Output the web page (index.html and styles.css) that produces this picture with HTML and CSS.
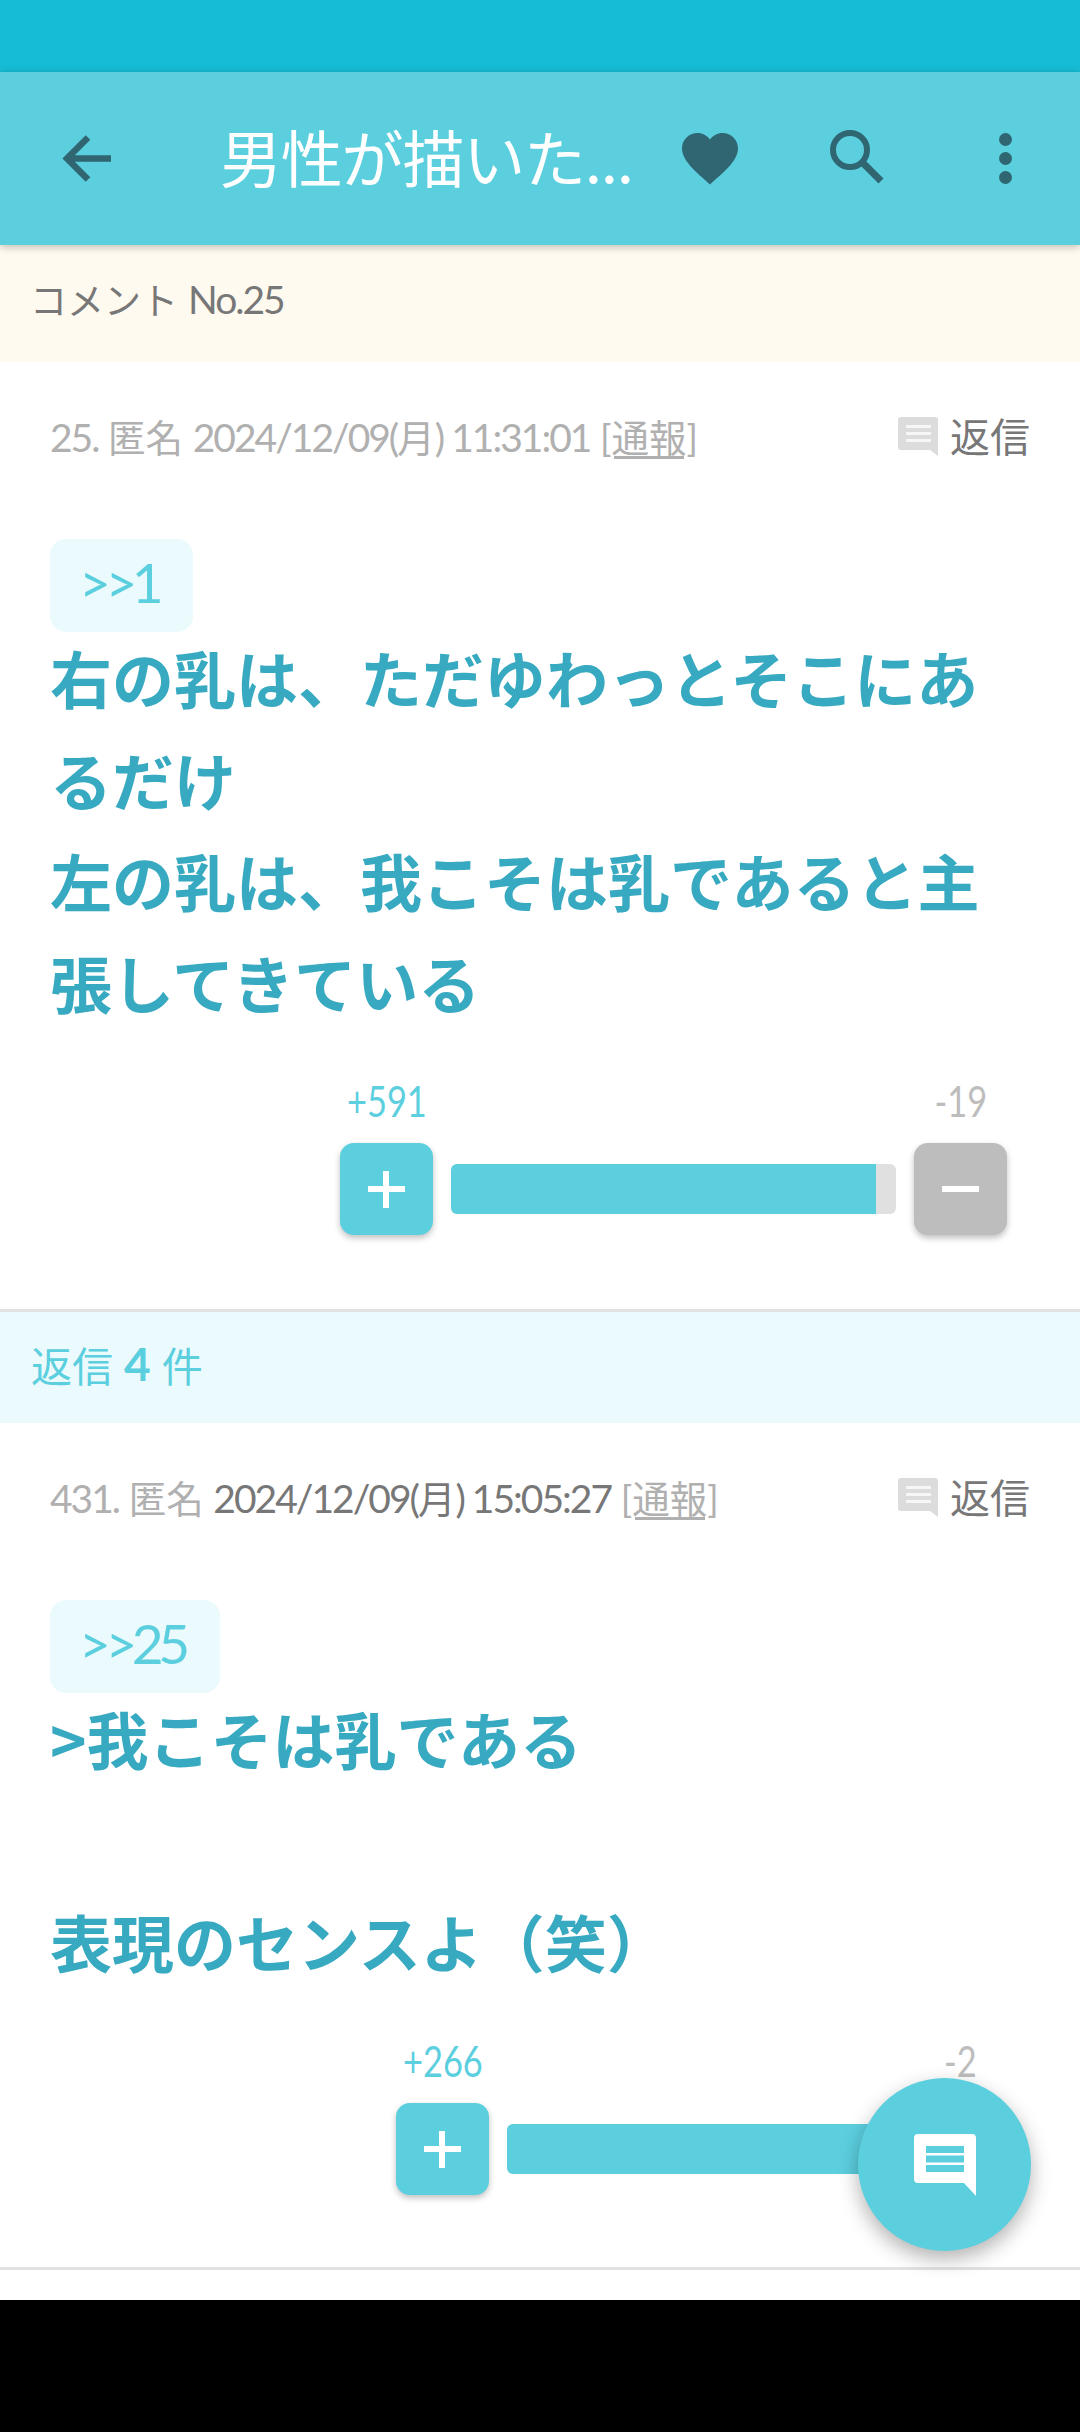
FILE: index.html
```html
<!DOCTYPE html>
<html lang="ja">
<head>
  <meta charset="UTF-8">
  <title>コメント No.25</title>
  <link rel="stylesheet" href="styles.css">
</head>
<body>
  <div class="status-bar"></div>
  <header class="app-bar">
    <svg class="icon-back" viewBox="0 0 49 49"><path d="M49 24.500H6M26 3.500L5 24.500l21 21" fill="none" stroke="#2f6672" stroke-width="6.500"/></svg>
    <h1 class="title">男性が描いた...</h1>
    <svg class="icon-heart" viewBox="0 0 56 52"><path d="M28 51.500C18 42 0 29 0 15.500 0 6.500 7 0 15.500 0 20.500 0 25 2.500 28 6.500 31 2.500 35.500 0 40.500 0 49 0 56 6.500 56 15.500 56 29 38 42 28 51.500z" fill="#2f6672"/></svg>
    <svg class="icon-search" viewBox="0 0 54 54"><circle cx="20" cy="20" r="17" fill="none" stroke="#2f6672" stroke-width="6"/><path d="M32 32l19 19" fill="none" stroke="#2f6672" stroke-width="7"/></svg>
    <div class="dots"><i></i><i></i><i></i></div>
  </header>

  <main class="content">
    <div class="notice">コメント <span class="num">No.25</span></div>

    <article class="comment first">
      <div class="meta">
        <span class="meta-text"><span class="num">25.</span> 匿名 <span class="num">2024/12/09(</span>月<span class="num">) 11:31:01</span> <u>[通報]</u></span>
        <span class="reply">
          <svg class="icon-reply" viewBox="0 0 40 40"><path d="M3 0h34a3 3 0 0 1 3 3v36l-8-6H3a3 3 0 0 1-3-3V3a3 3 0 0 1 3-3z" fill="#dcdcdc"/><path d="M8 8h25v3H8zM8 15h25v3H8zM8 22h25v3H8z" fill="#f6f6f6"/></svg>
          返信
        </span>
      </div>
      <div class="anchor">&gt;&gt;1</div>
      <p class="body">右の乳は、ただゆわっとそこにあるだけ<br>左の乳は、我こそは乳であると主張してきている</p>
      <div class="votes">
        <div class="vote-col">
          <span class="count plus">+591</span>
          <span class="btn btn-plus"><i></i><i></i></span>
        </div>
        <div class="bar bar-long"><div class="bar-fill" style="width:95.500%"></div></div>
        <div class="vote-col">
          <span class="count minus">-19</span>
          <span class="btn btn-minus"><i></i></span>
        </div>
      </div>
    </article>

    <div class="reply-band">返信 <b>4</b> 件</div>

    <article class="comment">
      <div class="meta">
        <span class="meta-text"><span class="num">431.</span> 匿名 <span class="date"><span class="num">2024/12/09(</span>月<span class="num">) 15:05:27</span></span> <u>[通報]</u></span>
        <span class="reply">
          <svg class="icon-reply" viewBox="0 0 40 40"><path d="M3 0h34a3 3 0 0 1 3 3v36l-8-6H3a3 3 0 0 1-3-3V3a3 3 0 0 1 3-3z" fill="#dcdcdc"/><path d="M8 8h25v3H8zM8 15h25v3H8zM8 22h25v3H8z" fill="#f6f6f6"/></svg>
          返信
        </span>
      </div>
      <div class="anchor">&gt;&gt;25</div>
      <p class="body">&gt;我こそは乳である<br><br>表現のセンスよ（笑）</p>
      <div class="votes">
        <div class="vote-col">
          <span class="count plus">+266</span>
          <span class="btn btn-plus"><i></i><i></i></span>
        </div>
        <div class="bar bar-short"><div class="bar-fill" style="width:99%"></div></div>
        <div class="vote-col">
          <span class="count minus">-2</span>
          <span class="btn btn-minus"><i></i></span>
        </div>
      </div>
    </article>
  </main>

  <div class="nav-bar"></div>

  <button class="fab">
    <svg viewBox="0 0 62 62"><path d="M4 0h54a4 4 0 0 1 4 4v58L50 49H4a4 4 0 0 1-4-4V4a4 4 0 0 1 4-4z" fill="#fff"/><path d="M12 12h38v7H12zM12 21.500h38v7H12zM12 31h38v7H12z" fill="#5ccfdf"/></svg>
  </button>
</body>
</html>
```

FILE: styles.css
```css
* { box-sizing: border-box; }
html, body { margin: 0; height: 2432px; overflow: hidden; }
body {
  position: relative;
  display: flex;
  flex-direction: column;
  background: #fff;
  font-family: 'Lato', 'Noto Sans CJK JP', sans-serif;
  color: #777;
}

.status-bar { height: 72px; background: #16bcd4; }

.app-bar {
  position: relative;
  z-index: 2;
  height: 173px;
  display: flex;
  align-items: center;
  background: #5ccfdf;
  box-shadow: 0 2px 8px rgba(0,0,0,0.25);
}
.icon-back { width: 49px; height: 49px; margin-left: 62px; flex: none; }
.title {
  margin: -6px 0 0 109px;
  width: 462px;
  flex: none;
  font-size: 62px;
  font-weight: 400;
  color: #fff;
  white-space: nowrap;
  letter-spacing: -1.200px;
  font-family: 'Noto Sans CJK JP', sans-serif;
}
.icon-heart { width: 56px; height: 52px; flex: none; }
.icon-search { width: 54px; height: 54px; margin-left: 92px; margin-top: -3px; flex: none; }
.dots { margin-left: 115px; display: flex; flex-direction: column; gap: 6px; }
.dots i { display: block; width: 13px; height: 13px; border-radius: 50%; background: #2f6672; }

.content { flex: 1; display: flex; flex-direction: column; }

.num { font-size: 39px; letter-spacing: -2px; }

.notice {
  height: 117px;
  padding: 0 0 10px 30px;
  display: flex;
  align-items: center;
  gap: 10px;
  background: #fffaf0;
  font-size: 37px;
  color: #777;
}

.comment {
  padding: 0 50px;
  border-bottom: 3px solid #e2e2e2;
  height: 950px;
}
.comment + .reply-band + .comment { height: 847px; }

.meta {
  height: 177px;
  padding-top: 50px;
  display: flex;
  justify-content: space-between;
  align-items: flex-start;
  font-size: 37.500px;
  line-height: 50px;
  color: #b0b0b0;
}
.date { color: #777; }
.meta-text u { text-underline-offset: 4px; }
.reply {
  display: flex;
  align-items: center;
  gap: 12px;
  color: #777;
  font-size: 40px;
}
.icon-reply { width: 40px; height: 40px; }

.anchor {
  width: fit-content;
  height: 93px;
  padding: 0 35px 0 29px;
  line-height: 86px;
  border-radius: 16px;
  background: #ebfafc;
  color: #5ccfdf;
  font-size: 55px;
  letter-spacing: -5.500px;
}

.body {
  margin: -5px 0 0;
  font-family: 'Noto Sans CJK JP', sans-serif;
  font-size: 62px;
  font-weight: 700;
  line-height: 101.500px;
  color: #37a9c0;
}

.votes {
  margin-top: 28px;
  margin-right: 23px;
  display: flex;
  justify-content: flex-end;
  align-items: flex-end;
  gap: 18px;
}
.vote-col { display: flex; flex-direction: column; align-items: center; width: 93px; }
.count {
  font-size: 43px;
  line-height: 80px;
  margin-bottom: 2px;
  white-space: nowrap;
  transform: scaleX(0.8);
}
.plus { color: #5ccfdf; }
.minus { color: #bdbdbd; }
.btn {
  position: relative;
  display: block;
  width: 93px;
  height: 92px;
  border-radius: 14px;
  box-shadow: 0 3px 6px rgba(0,0,0,0.25);
}
.btn-plus { background: #5ccfdf; }
.btn-minus { background: #bdbdbd; }
.btn i { position: absolute; background: #fff; }
.btn i:first-child { left: 28px; top: 43px; width: 37px; height: 6px; }
.btn-plus i:last-child { left: 43px; top: 28px; width: 6px; height: 37px; }

.bar {
  height: 50px;
  margin-bottom: 21px;
  border-radius: 6px;
  background: #e0e0e0;
  overflow: hidden;
}
.bar-long { width: 445px; }
.bar-short { width: 389px; }
.bar-fill { height: 100%; background: #5ccfdf; }

.reply-band {
  height: 111px;
  padding: 0 0 8px 31px;
  display: flex;
  align-items: center;
  gap: 11px;
  background: #ebfafc;
  color: #5ccfdf;
  font-size: 41px;
}
.reply-band b { font-size: 46px; font-weight: 700; }

.nav-bar { height: 132px; background: #000; flex: none; }

.fab {
  position: absolute;
  left: 858px;
  top: 2078px;
  width: 173px;
  height: 173px;
  padding: 0;
  border: none;
  border-radius: 50%;
  background: #5ccfdf;
  box-shadow: 0 8px 20px rgba(0,0,0,0.3);
  display: flex;
  align-items: center;
  justify-content: center;
}
.fab svg { width: 62px; height: 62px; }
```
